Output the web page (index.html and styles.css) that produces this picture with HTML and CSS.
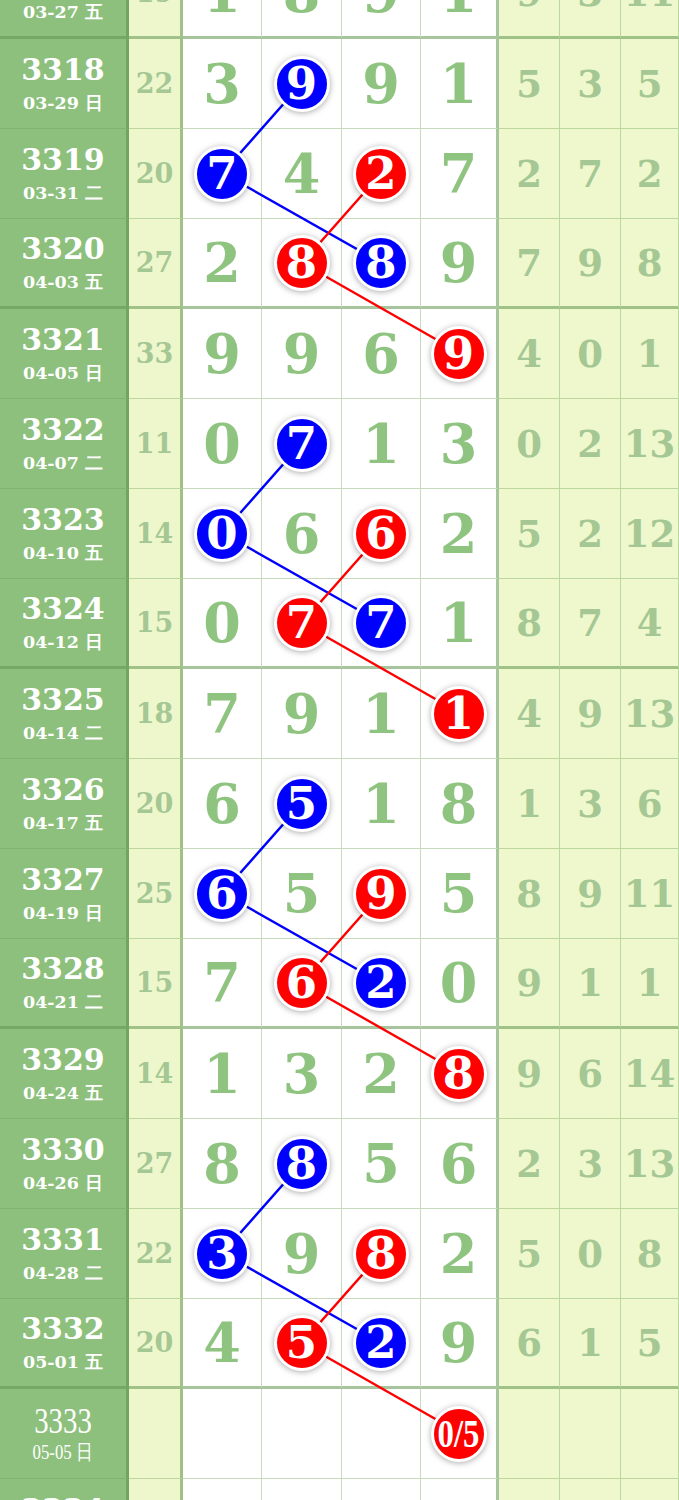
FILE: index.html
```html
<!DOCTYPE html>
<html lang="zh">
<head>
  <meta charset="UTF-8">
  <meta name="viewport" content="width=device-width, initial-scale=1.0">
  <title>走势图</title>
  <link rel="stylesheet" href="styles.css">
</head>
<body>

<div class="chart">
  <!-- connecting lines between the marked balls -->
  <svg class="links" width="679" height="1620" viewBox="0 0 679 1620">
    <polyline class="blue" points="302,134 222.5,224 381.5,314" />
    <polyline class="red" points="381.5,224 302,314 460,404" />
    <polyline class="blue" points="302,494 222.5,584 381.5,674" />
    <polyline class="red" points="381.5,584 302,674 460,764" />
    <polyline class="blue" points="302,854 222.5,944 381.5,1034" />
    <polyline class="red" points="381.5,944 302,1034 460,1124" />
    <polyline class="blue" points="302,1214 222.5,1304 381.5,1394" />
    <polyline class="red" points="381.5,1304 302,1394 460,1484" />
  </svg>

  <div class="row end">
    <div class="issue"><b>3317</b><span>03-27 五</span></div>
    <div class="sum">19</div>
    <div class="num">1</div><div class="num">8</div><div class="num">9</div><div class="num last">1</div>
    <div class="ext">9</div><div class="ext">3</div><div class="ext">11</div>
  </div>
  <div class="row">
    <div class="issue"><b>3318</b><span>03-29 日</span></div>
    <div class="sum">22</div>
    <div class="num">3</div><div class="num"><i class="ball b">9</i></div><div class="num">9</div><div class="num last">1</div>
    <div class="ext">5</div><div class="ext">3</div><div class="ext">5</div>
  </div>
  <div class="row">
    <div class="issue"><b>3319</b><span>03-31 二</span></div>
    <div class="sum">20</div>
    <div class="num"><i class="ball b">7</i></div><div class="num">4</div><div class="num"><i class="ball r">2</i></div><div class="num last">7</div>
    <div class="ext">2</div><div class="ext">7</div><div class="ext">2</div>
  </div>
  <div class="row end">
    <div class="issue"><b>3320</b><span>04-03 五</span></div>
    <div class="sum">27</div>
    <div class="num">2</div><div class="num"><i class="ball r">8</i></div><div class="num"><i class="ball b">8</i></div><div class="num last">9</div>
    <div class="ext">7</div><div class="ext">9</div><div class="ext">8</div>
  </div>
  <div class="row">
    <div class="issue"><b>3321</b><span>04-05 日</span></div>
    <div class="sum">33</div>
    <div class="num">9</div><div class="num">9</div><div class="num">6</div><div class="num last"><i class="ball r">9</i></div>
    <div class="ext">4</div><div class="ext">0</div><div class="ext">1</div>
  </div>
  <div class="row">
    <div class="issue"><b>3322</b><span>04-07 二</span></div>
    <div class="sum">11</div>
    <div class="num">0</div><div class="num"><i class="ball b">7</i></div><div class="num">1</div><div class="num last">3</div>
    <div class="ext">0</div><div class="ext">2</div><div class="ext">13</div>
  </div>
  <div class="row">
    <div class="issue"><b>3323</b><span>04-10 五</span></div>
    <div class="sum">14</div>
    <div class="num"><i class="ball b">0</i></div><div class="num">6</div><div class="num"><i class="ball r">6</i></div><div class="num last">2</div>
    <div class="ext">5</div><div class="ext">2</div><div class="ext">12</div>
  </div>
  <div class="row end">
    <div class="issue"><b>3324</b><span>04-12 日</span></div>
    <div class="sum">15</div>
    <div class="num">0</div><div class="num"><i class="ball r">7</i></div><div class="num"><i class="ball b">7</i></div><div class="num last">1</div>
    <div class="ext">8</div><div class="ext">7</div><div class="ext">4</div>
  </div>
  <div class="row">
    <div class="issue"><b>3325</b><span>04-14 二</span></div>
    <div class="sum">18</div>
    <div class="num">7</div><div class="num">9</div><div class="num">1</div><div class="num last"><i class="ball r">1</i></div>
    <div class="ext">4</div><div class="ext">9</div><div class="ext">13</div>
  </div>
  <div class="row">
    <div class="issue"><b>3326</b><span>04-17 五</span></div>
    <div class="sum">20</div>
    <div class="num">6</div><div class="num"><i class="ball b">5</i></div><div class="num">1</div><div class="num last">8</div>
    <div class="ext">1</div><div class="ext">3</div><div class="ext">6</div>
  </div>
  <div class="row">
    <div class="issue"><b>3327</b><span>04-19 日</span></div>
    <div class="sum">25</div>
    <div class="num"><i class="ball b">6</i></div><div class="num">5</div><div class="num"><i class="ball r">9</i></div><div class="num last">5</div>
    <div class="ext">8</div><div class="ext">9</div><div class="ext">11</div>
  </div>
  <div class="row end">
    <div class="issue"><b>3328</b><span>04-21 二</span></div>
    <div class="sum">15</div>
    <div class="num">7</div><div class="num"><i class="ball r">6</i></div><div class="num"><i class="ball b">2</i></div><div class="num last">0</div>
    <div class="ext">9</div><div class="ext">1</div><div class="ext">1</div>
  </div>
  <div class="row">
    <div class="issue"><b>3329</b><span>04-24 五</span></div>
    <div class="sum">14</div>
    <div class="num">1</div><div class="num">3</div><div class="num">2</div><div class="num last"><i class="ball r">8</i></div>
    <div class="ext">9</div><div class="ext">6</div><div class="ext">14</div>
  </div>
  <div class="row">
    <div class="issue"><b>3330</b><span>04-26 日</span></div>
    <div class="sum">27</div>
    <div class="num">8</div><div class="num"><i class="ball b">8</i></div><div class="num">5</div><div class="num last">6</div>
    <div class="ext">2</div><div class="ext">3</div><div class="ext">13</div>
  </div>
  <div class="row">
    <div class="issue"><b>3331</b><span>04-28 二</span></div>
    <div class="sum">22</div>
    <div class="num"><i class="ball b">3</i></div><div class="num">9</div><div class="num"><i class="ball r">8</i></div><div class="num last">2</div>
    <div class="ext">5</div><div class="ext">0</div><div class="ext">8</div>
  </div>
  <div class="row end">
    <div class="issue"><b>3332</b><span>05-01 五</span></div>
    <div class="sum">20</div>
    <div class="num">4</div><div class="num"><i class="ball r">5</i></div><div class="num"><i class="ball b">2</i></div><div class="num last">9</div>
    <div class="ext">6</div><div class="ext">1</div><div class="ext">5</div>
  </div>
  <div class="row">
    <div class="issue next"><b>3333</b><span>05-05 日</span></div>
    <div class="sum"></div>
    <div class="num"></div><div class="num"></div><div class="num"></div><div class="num last"><i class="ball r guess"><em>0/5</em></i></div>
    <div class="ext"></div><div class="ext"></div><div class="ext"></div>
  </div>
  <div class="row">
    <div class="issue"><b>3334</b><span>05-07 二</span></div>
    <div class="sum"></div>
    <div class="num"></div><div class="num"></div><div class="num"></div><div class="num last"></div>
    <div class="ext"></div><div class="ext"></div><div class="ext"></div>
  </div>
</div>

</body>
</html>
```

FILE: styles.css
```css
:root {
  --issue-bg: #8dc07d;
  --sum-bg: #eef7cc;
  --side-bg: #eef8cc;
  --line: rgba(104, 160, 84, 0.38);
  --line-strong: rgba(96, 150, 78, 0.55);
  --num: #8fc480;
  --muted: #a4c794;
  --blue: #0000ff;
  --red: #ff0000;
}
body {
  margin: 0;
  background-color: #ffffff;
  font-family: "DejaVu Serif", serif;
  overflow: hidden;
}
.chart {
  position: relative;
  width: 679px;
  margin-top: -51px;
}
.links {
  position: absolute;
  top: 0;
  left: 0;
  z-index: 1;
}
.links polyline {
  fill: none;
  stroke-width: 2.4;
}
.links .blue {
  stroke: var(--blue);
}
.links .red {
  stroke: var(--red);
}
.row {
  display: grid;
  grid-template-columns: 129px 54px 79px 80px 79px 78px 61px 61px 58px;
  height: 90px;
}
.row > div {
  box-sizing: border-box;
  display: flex;
  align-items: center;
  justify-content: center;
  border-right: 1px solid var(--line);
  border-bottom: 1px solid var(--line);
}
.row.end > div {
  border-bottom: 3px solid var(--line-strong);
}
.issue {
  flex-direction: column;
  background-color: var(--issue-bg);
  color: #ffffff;
  font-weight: bold;
}
.row > .issue {
  border-right: 3px solid rgba(96, 150, 78, 0.6);
}
.issue b {
  font-size: 30px;
  line-height: 34px;
}
.issue span {
  font-size: 17.5px;
  line-height: 22px;
  margin-top: 5px;
}
.issue.next {
  font-family: "Liberation Serif", serif;
  font-weight: normal;
}
.issue.next b {
  font-weight: normal;
  font-size: 36px;
  transform: scaleX(0.8);
}
.issue.next span {
  font-size: 21px;
  margin-top: 3px;
  transform: scaleX(0.8);
}
.sum {
  background-color: var(--sum-bg);
  color: var(--muted);
  font-size: 27px;
  font-weight: bold;
}
.row > .sum {
  border-right: 3px solid var(--line-strong);
}
.num {
  color: var(--num);
  font-size: 54px;
  font-weight: bold;
}
.row > .last {
  border-right: 3px solid var(--line-strong);
}
.ext {
  background-color: var(--side-bg);
  color: var(--muted);
  font-size: 37px;
  font-weight: bold;
}
.ball {
  position: relative;
  z-index: 2;
  box-sizing: border-box;
  width: 56px;
  height: 56px;
  display: flex;
  align-items: center;
  justify-content: center;
  border: 3px solid #ffffff;
  border-radius: 50%;
  box-shadow: 0 1px 6px rgba(0, 0, 0, 0.35);
  color: #ffffff;
  font-style: normal;
  font-size: 45px;
}
.ball.b {
  background-color: var(--blue);
}
.ball.r {
  background-color: var(--red);
}
.ball.guess em {
  font-family: "Liberation Serif", serif;
  font-style: normal;
  font-weight: bold;
  font-size: 40px;
  transform: scaleX(0.82);
}
```
